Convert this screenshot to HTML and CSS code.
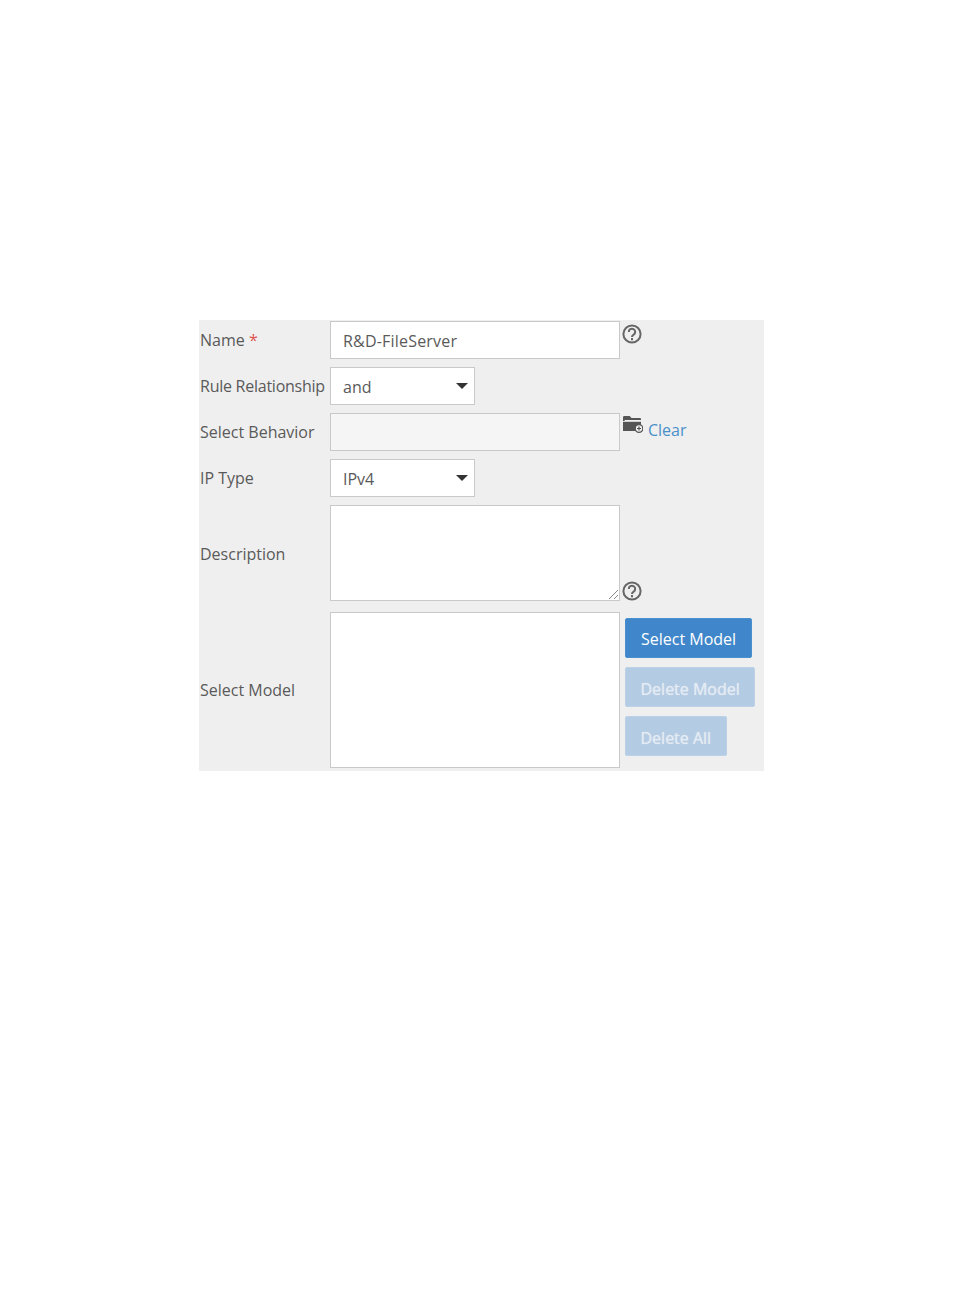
FILE: index.html
```html
<!DOCTYPE html>
<html lang="en">

<head>
    <meta charset="UTF-8">
    <title>Rule</title>
    <link rel="stylesheet" href="styles.css">
</head>

<body>
    <div class="panel">
        <div class="row">
            <label class="label">Name <span class="required">*</span></label>
            <div class="field wide name-text">R&amp;D-FileServer</div>
            <svg class="help" viewBox="0 0 20 20">
                <circle cx="10" cy="10" r="8.6" />
                <path d="M6.800 8a3.200 3.200 0 1 1 4.900 2.600c-1.100.7-1.700 1.200-1.700 2.400" />
                <path d="M10 14v2.200" />
            </svg>
        </div>
        <div class="row">
            <label class="label tight">Rule Relationship</label>
            <div class="field narrow">and<span class="caret"></span></div>
        </div>
        <div class="row">
            <label class="label">Select Behavior</label>
            <div class="field wide disabled"></div>
            <svg class="folder" viewBox="0 0 20 17">
                <path d="M0 1.500C0 .7.500 0 1.300 0h5.400l1.800 2h8.200c.7 0 1.300.5 1.300 1.200V4H2.500C1.800 4 1.500 4.400 1.500 5H0z" />
                <path d="M0 5.800h18V15H0z" />
                <circle class="plus-ring" cx="16" cy="12.500" r="3.800" />
                <path class="plus" d="M14 12.500h4M16 10.500v4" />
            </svg>
            <a class="clear" href="#">Clear</a>
        </div>
        <div class="row">
            <label class="label">IP Type</label>
            <div class="field narrow">IPv4<span class="caret"></span></div>
        </div>
        <div class="row row-desc">
            <label class="label label-desc">Description</label>
            <div class="field wide area">
                <svg class="grip" viewBox="0 0 11 11">
                    <path d="M1 10 10 1M6 10l4-4" />
                </svg>
            </div>
            <svg class="help help-low" viewBox="0 0 20 20">
                <circle cx="10" cy="10" r="8.6" />
                <path d="M6.800 8a3.200 3.200 0 1 1 4.900 2.600c-1.100.7-1.700 1.200-1.700 2.400" />
                <path d="M10 14v2.200" />
            </svg>
        </div>
        <div class="row row-model">
            <label class="label">Select Model</label>
            <div class="field wide list"></div>
            <div class="buttons">
                <button class="btn">Select Model</button>
                <button class="btn off">Delete Model</button>
                <button class="btn off">Delete All</button>
            </div>
        </div>
    </div>
</body>

</html>
```

FILE: styles.css
```css
body {
    margin: 0;
    background: white;
    font-family: "Open Sans", Arial, sans-serif;
    font-size: 16px;
    color: #5a5a5a;
}

.panel {
    width: 565px;
    height: 451px;
    margin: 320px 0 0 199px;
    padding-top: 1px;
    box-sizing: border-box;
    background: #efefef;
}

.row {
    display: flex;
    align-items: flex-start;
    margin-bottom: 8px;
}

.row-desc {
    margin-bottom: 11px;
    align-items: center;
}

.row-model {
    margin-bottom: 0;
    align-items: center;
}

.label {
    width: 131px;
    flex: none;
    padding-left: 1px;
    box-sizing: border-box;
    line-height: 38px;
    white-space: nowrap;
}

.label-desc {
    padding-top: 2px;
}

.tight {
    letter-spacing: -0.25px;
}

.required {
    color: #e0534f;
}

.field {
    position: relative;
    height: 38px;
    box-sizing: border-box;
    padding-left: 12px;
    background: white;
    border: 1px solid #c9c9c9;
    line-height: 39px;
}

.name-text {
    letter-spacing: 0.2px;
}

.wide {
    width: 290px;
}

.narrow {
    width: 145px;
}

.disabled {
    background: #f5f5f5;
}

.area {
    height: 96px;
}

.list {
    height: 156px;
}

.caret {
    position: absolute;
    top: 15px;
    right: 6px;
    border-top: 6px solid #333;
    border-left: 6px solid transparent;
    border-right: 6px solid transparent;
}

.grip {
    position: absolute;
    right: 0;
    bottom: 0;
    width: 11px;
    height: 11px;
    fill: none;
    stroke: #888;
}

.help {
    width: 20px;
    height: 20px;
    margin: 3px 0 0 2px;
    fill: none;
    stroke: #666;
    stroke-width: 2;
}

.help-low {
    align-self: flex-end;
}

.folder {
    width: 20px;
    height: 17px;
    margin: 3px 0 0 3px;
    fill: #555;
}

.plus-ring {
    fill: #efefef;
    stroke: #555;
    stroke-width: 1.3;
}

.plus {
    stroke: #555;
    stroke-width: 1.2;
}

.clear {
    margin: 6px 0 0 5px;
    color: #4a90c9;
    text-decoration: none;
    line-height: 22px;
}

.buttons {
    display: flex;
    flex-direction: column;
    align-items: flex-start;
    align-self: flex-start;
    gap: 9px;
    margin: 6px 0 0 5px;
}

.btn {
    height: 40px;
    padding: 2px 15px 0;
    border: 1px solid #4a90cf;
    border-radius: 2px;
    background: #3f87ca;
    color: white;
    font-family: inherit;
    font-size: 16px;
}

.off {
    padding: 3px 14.500px 0;
    background: #b3cbe3;
    border-color: #bcd2e8;
    color: #e4ebf3;
    text-shadow: 0 0 1px #e4ebf3;
}
```
